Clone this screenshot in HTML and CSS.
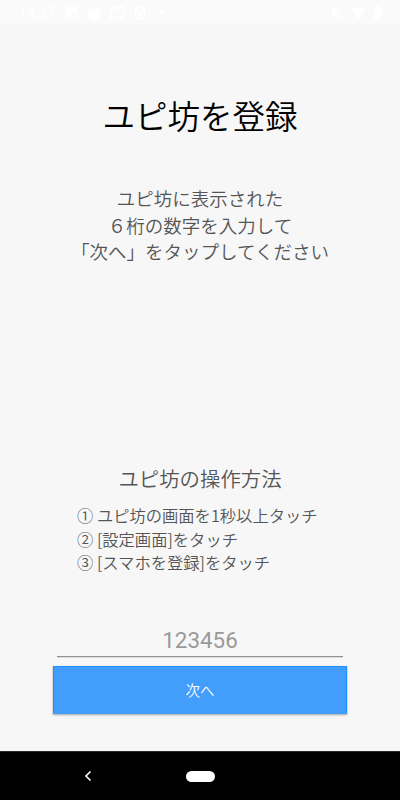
FILE: index.html
```html
<!DOCTYPE html>
<html lang="ja">
<head>
    <meta charset="UTF-8">
    <meta name="viewport" content="width=device-width, initial-scale=1.0">
    <title>ユピ坊を登録</title>
    <link rel="stylesheet" href="styles.css">
</head>
<body>

    <!-- Status bar -->
    <div class="status-bar">
        <span class="time">14:37</span>
        <div class="notifications">
            <svg width="12" height="12" viewBox="0 0 12 12"><path fill-rule="evenodd" d="M1 0h10a1 1 0 0 1 1 1v10a1 1 0 0 1-1 1H1a1 1 0 0 1-1-1V1a1 1 0 0 1 1-1zM1.5 10h9L7.6 5.8 5.4 8.6 3.8 6.8z"/></svg>
            <svg width="12" height="15" viewBox="0 0 12 15"><path d="M1.500 0L4 4l4 .5L10.500 0l1 6c1.500 6-1 9-5.500 9S-1 12 .5 6z"/></svg>
            <svg width="15" height="14" viewBox="0 0 15 14"><path class="line" d="M.8 3v10.200H12M3.500 10.500V1l5.300 4.500L14 1v9.500zM3.500 1H14"/></svg>
            <svg width="10" height="14" viewBox="0 0 10 14"><path fill-rule="evenodd" d="M1 0h8a1 1 0 0 1 1 1v12a1 1 0 0 1-1 1H1a1 1 0 0 1-1-1V1a1 1 0 0 1 1-1zM5 1.500a1.300 1.300 0 1 0 0 2.600 1.300 1.300 0 0 0 0-2.600zM5 5.500a3.500 3.500 0 1 0 0 7 3.500 3.500 0 0 0 0-7zM5 7a2 2 0 1 1 0 4 2 2 0 0 1 0-4z"/></svg>
            <span class="dot"></span>
        </div>
        <div class="system">
            <svg width="12" height="13" viewBox="0 0 12 13"><path d="M2 9.500V6c0-2 1-3.300 3-3.800V1h2v1.200C9 2.700 10 4 10 6v3.500l1 1H1zM5 11.500h2v1H5z"/><path class="slash" d="M1.500 0l11 11.500"/><path class="line" d="M.5.800l11 11.500"/></svg>
            <svg width="14" height="12" viewBox="0 0 14 12"><path d="M0 3c4-4 10-4 14 0L7 12z"/></svg>
            <svg width="8" height="13" viewBox="0 0 8 13"><path d="M2.500 0h3v1.500H8V13H0V1.500h2.500z"/></svg>
        </div>
    </div>

    <!-- Register form -->
    <main class="content">
        <h1>ユピ坊を登録</h1>
        <p class="message">ユピ坊に表示された<br>６桁の数字を入力して<br>「次へ」をタップしてください</p>

        <h2>ユピ坊の操作方法</h2>
        <div class="steps">
            <div>① ユピ坊の画面を1秒以上タッチ</div>
            <div>② [設定画面]をタッチ</div>
            <div>③ [スマホを登録]をタッチ</div>
        </div>

        <input class="code" type="text" inputmode="numeric" maxlength="6" placeholder="123456">
        <button class="next-btn">次へ</button>
    </main>

    <!-- Navigation bar -->
    <div class="nav-bar">
        <svg class="back" width="8" height="12" viewBox="0 0 8 12"><path d="M6.500 1.500L2 6l4.500 4.500"/></svg>
        <span class="home"></span>
    </div>

</body>
</html>
```

FILE: styles.css
```css
* {
    box-sizing: border-box;
}
body {
    margin: 0;
    height: 800px;
    display: flex;
    flex-direction: column;
    overflow: hidden;
    background-color: #f7f7f7;
    color: #555;
    font-family: "Noto Sans CJK JP", sans-serif;
    font-weight: 350;
}
/* Status bar */
.status-bar {
    height: 24px;
    padding: 1px 18px 0 19px;
    display: flex;
    align-items: center;
    background-color: #fafafa;
    color: #fff;
    font: 500 14px Roboto, sans-serif;
}
.status-bar svg {
    fill: #fff;
}
.status-bar .line {
    fill: none;
    stroke: #fff;
    stroke-width: 1.5;
}
.status-bar .slash {
    fill: none;
    stroke: #fafafa;
    stroke-width: 1.5;
}
.time {
    width: 47px;
}
.notifications {
    display: flex;
    align-items: center;
    gap: 10px;
}
.dot {
    width: 5px;
    height: 5px;
    margin-left: 5px;
    border-radius: 50%;
    background-color: #fff;
}
.system {
    display: flex;
    align-items: center;
    gap: 9px;
    margin-left: auto;
}
/* Content */
.content {
    flex: 1;
    display: flex;
    flex-direction: column;
    align-items: center;
}
h1 {
    margin: 67px 0 0;
    color: #000;
    font-size: 32.5px;
    font-weight: 350;
    line-height: 48px;
}
.message {
    margin: 46px 0 0;
    font-size: 18.5px;
    line-height: 26.6px;
    text-align: center;
}
h2 {
    margin: 198.2px 0 0;
    font-size: 20.4px;
    font-weight: 350;
    line-height: 30px;
}
.steps {
    width: 246px;
    margin-top: 11px;
    font-size: 16.3px;
    line-height: 23.6px;
    white-space: nowrap;
}
.code {
    width: 286px;
    height: 34px;
    margin-top: 48px;
    padding: 2px 0 0;
    border: none;
    border-bottom: 1px solid #929292;
    background: none;
    box-shadow: 0 1px 0 #dcdcdc;
    color: #555;
    font: 400 22.4px Roboto, sans-serif;
    text-align: center;
    outline: none;
}
.code::placeholder {
    color: #999;
}
.next-btn {
    width: 294px;
    height: 48px;
    margin-top: 9px;
    padding: 0;
    border: 1px solid #1e90ff;
    border-bottom-color: #429dfb;
    background-color: #429dfb;
    box-shadow: 0 1px 2px rgba(0, 0, 0, 0.35);
    color: #fff;
    font: 350 14.5px "Noto Sans CJK JP", sans-serif;
}
/* Navigation bar */
.nav-bar {
    height: 49px;
    padding-left: 84px;
    display: flex;
    align-items: center;
    border-top: 1px solid #2a2a2a;
    background-color: #000;
}
.back {
    fill: none;
    stroke: #fff;
    stroke-width: 1.6;
}
.home {
    width: 29px;
    height: 11px;
    margin-left: 94px;
    border-radius: 6px;
    background-color: #fff;
}
```
